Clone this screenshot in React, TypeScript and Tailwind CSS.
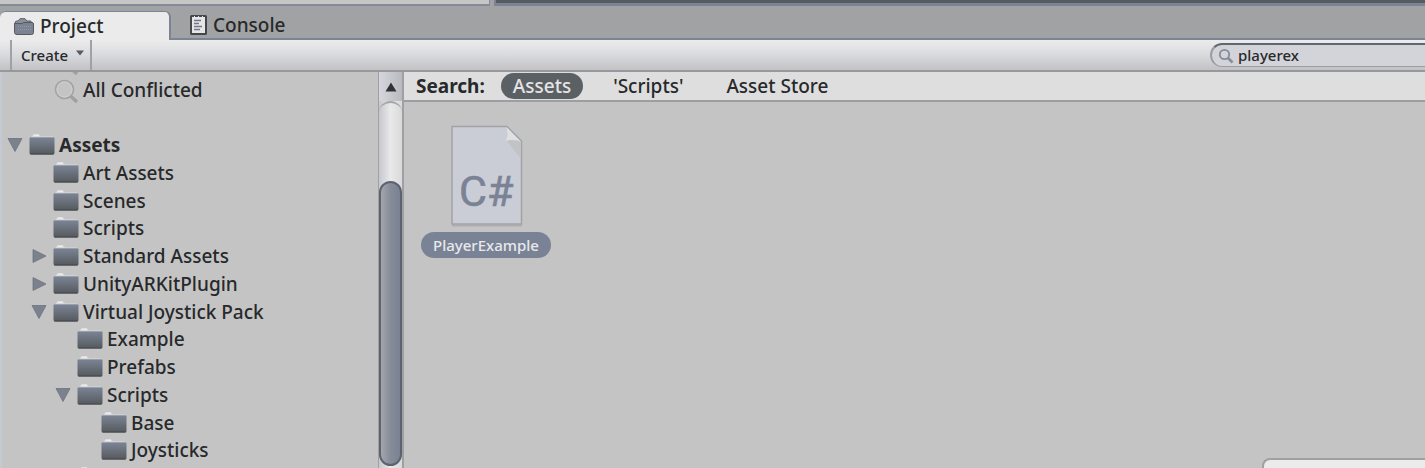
import { useState } from "react";

type Kind = "folder" | "search";

interface Row {
  label: string;
  kind: Kind;
  depth: 0 | 1 | 2 | 3;
  state?: "open" | "closed";
  bold?: boolean;
}

const rows: (Row | null)[] = [
  { label: "", kind: "search", depth: 1 },
  { label: "All Conflicted", kind: "search", depth: 1 },
  null,
  { label: "Assets", kind: "folder", depth: 0, state: "open", bold: true },
  { label: "Art Assets", kind: "folder", depth: 1 },
  { label: "Scenes", kind: "folder", depth: 1 },
  { label: "Scripts", kind: "folder", depth: 1 },
  { label: "Standard Assets", kind: "folder", depth: 1, state: "closed" },
  { label: "UnityARKitPlugin", kind: "folder", depth: 1, state: "closed" },
  { label: "Virtual Joystick Pack", kind: "folder", depth: 1, state: "open" },
  { label: "Example", kind: "folder", depth: 2 },
  { label: "Prefabs", kind: "folder", depth: 2 },
  { label: "Scripts", kind: "folder", depth: 2, state: "open" },
  { label: "Base", kind: "folder", depth: 3 },
  { label: "Joysticks", kind: "folder", depth: 3 },
  { label: "", kind: "folder", depth: 2 },
];

const indents = ["pl-1", "pl-7", "pl-13", "pl-19"];

function FolderIcon() {
  return (
    <svg viewBox="0 0 26 22" className="h-[22px] w-[26px] shrink-0" aria-hidden="true">
      <defs>
        <linearGradient id="folder" x1="0" y1="0" x2="0" y2="1">
          <stop offset="0" stopColor="#7d8596" />
          <stop offset="0.55" stopColor="#676d77" />
          <stop offset="1" stopColor="#55595c" />
        </linearGradient>
      </defs>
      <path d="M2 3.500 L4.500 0.500 H10 L12 2.500 H24 V4 H1.500Z" fill="#d8d9dd" />
      <path d="M4.500 1.200 H10" stroke="#efeff1" strokeWidth="1.400" />
      <rect x="0.500" y="3" width="25" height="17.500" rx="1.500" fill="url(#folder)" />
      <path d="M1 3.500 H25" stroke="#98a0ad" />
      <path d="M1.500 20 H24.500" stroke="#43474b" />
    </svg>
  );
}

function LensIcon() {
  return (
    <svg viewBox="0 0 26 26" className="h-[26px] w-[26px] shrink-0" fill="none" aria-hidden="true">
      <circle cx="11.500" cy="12.500" r="9" stroke="#a3a3a4" strokeWidth="1.600" />
      <circle cx="11.500" cy="12.500" r="7.500" stroke="#d0d0d2" strokeWidth="1" />
      <path d="M17.500 19 L24 25" stroke="#a0a0a1" strokeWidth="3.500" />
    </svg>
  );
}

function Arrow({ open }: { open: boolean }) {
  return (
    <svg viewBox="0 0 16 16" className="h-4 w-4" aria-hidden="true">
      <path
        d={open ? "M1 1.500 H15 L8 14.500Z" : "M2 1.500 L15 8 L2 14.500Z"}
        fill="#7b818d"
        stroke="#6d7380"
        strokeWidth="0.800"
      />
    </svg>
  );
}

function ProjectIcon() {
  return (
    <svg viewBox="0 0 20 17" className="h-[17px] w-5" aria-hidden="true">
      <path d="M1 5 Q1 3 3 3 H4 L6 0.700 H11 L13 3 H17 V6 H1Z" fill="#8a909d" stroke="#5b6067" />
      <path d="M0.500 5.500 H8 L9.500 4.500 H18 Q19.500 4.500 19.500 6 V14.500 Q19.500 16.500 17.500 16.500 H3 Q0.500 16.500 0.500 14.500Z" fill="#7b8292" stroke="#575b60" />
      <path d="M4 8.500 H17 M4 11.500 H17" stroke="#9298a5" strokeDasharray="1 1" />
    </svg>
  );
}

function ConsoleIcon() {
  return (
    <svg viewBox="0 0 17 20" className="h-5 w-[17px]" aria-hidden="true">
      <rect x="1" y="1" width="15" height="18" rx="0.500" fill="#e6e6e8" stroke="#43474a" strokeWidth="2" />
      <path d="M4.500 1 V3 M8.500 1 V3 M12.500 1 V3" stroke="#e6e6e8" strokeWidth="1" />
      <path d="M4 5.500 H11 M4 8.500 H9 M4 11.500 H12 M4 14.500 H10" stroke="#6f7685" strokeWidth="1.300" />
    </svg>
  );
}

function ScriptFileIcon() {
  return (
    <svg viewBox="0 0 74 102" className="h-[102px] w-[74px]" aria-hidden="true">
      <path d="M3 100.500 H73" stroke="#aeaeb0" strokeWidth="2" />
      <path d="M3 1.500 H58 L72.500 16 V99 H3Z" fill="#cacdd6" stroke="#a1a2a5" strokeWidth="1.500" />
      <path d="M57 15 L72 34 V16Z" fill="#c1c3c4" />
      <path d="M57.500 2 Q60 13 56 16 Q66 13 72 17Z" fill="#dfe0e2" />
      <text
        x="10"
        y="81"
        fontSize="43"
        fill="#7a8395"
        stroke="#7a8395"
        strokeWidth="0.600"
        className="font-['Roboto',sans-serif]"
      >
        C#
      </text>
    </svg>
  );
}

function TreeRow({ row }: { row: Row }) {
  return (
    <li className={`flex min-h-0 items-center ${indents[row.depth]}`}>
      <span className="flex w-[23px] shrink-0 items-center pl-px">
        {row.state && (
          <button type="button" aria-label={`Toggle ${row.label}`}>
            <Arrow open={row.state === "open"} />
          </button>
        )}
      </span>
      {row.kind === "folder" ? <FolderIcon /> : <LensIcon />}
      <span className={`pl-1 whitespace-nowrap ${row.bold ? "font-bold" : "font-medium"}`}>{row.label}</span>
    </li>
  );
}

export default function App() {
  const [query, setQuery] = useState("playerex");
  return (
    <div className="flex h-screen flex-col overflow-hidden bg-[#c4c4c4] font-['Noto_Sans',sans-serif] text-[19px] leading-6 text-[#27292b]">
      <div className="flex h-[6px] shrink-0 gap-1 bg-[#a1a2a4]">
        <div className="w-[490px] border-r border-b-2 border-[#848a97] bg-[#c6c6c7]" />
        <div className="flex-1 border-b-3 border-l-2 border-[#7b8394] bg-[#565b60]" />
      </div>

      <nav className="flex h-[34px] shrink-0 items-end bg-[#a1a2a4] pt-[5px]">
        <button
          type="button"
          className="flex h-full w-[171px] items-center gap-[6px] rounded-t-md border-t border-r-2 border-[#7b8394] bg-[#ebebeb] pl-[14px] font-medium"
        >
          <ProjectIcon />
          Project
        </button>
        <button
          type="button"
          className="flex h-full flex-1 items-center gap-[6px] border-b-2 border-[#7b8394] pl-[19px] font-medium"
        >
          <ConsoleIcon />
          Console
        </button>
      </nav>

      <div className="flex h-8 shrink-0 items-center justify-between border-b-2 border-[#96989d] bg-linear-to-b from-[#ececec] via-[#d9dade] to-[#c2c2c4] pl-[10px]">
        <button
          type="button"
          className="flex h-full items-center gap-2 border-x-2 border-[#a1a1a3] pr-[6px] pl-[9px] text-[15px] font-medium"
        >
          Create
          <svg viewBox="0 0 8 6" className="mb-1 h-[6px] w-2" aria-hidden="true">
            <path d="M0 0.500 H8 L4 5.500Z" fill="#555b66" />
          </svg>
        </button>
        <label className="flex h-6 w-[215px] items-center gap-1 rounded-l-full border-t-2 border-b border-l-2 border-[#9b9da2] border-t-[#62676f] bg-[#d3d4d9] pl-[6px]">
          <svg viewBox="0 0 16 16" className="h-4 w-4 shrink-0" fill="none" aria-hidden="true">
            <circle cx="6.500" cy="6.500" r="4.700" stroke="#858c9a" strokeWidth="1.800" />
            <path d="M10 10 L14.500 14.500" stroke="#858c9a" strokeWidth="2.600" />
          </svg>
          <input
            type="text"
            aria-label="Search"
            value={query}
            onChange={(e) => setQuery(e.target.value)}
            className="w-full min-w-0 bg-transparent pb-[2px] text-[15px] leading-5 font-medium outline-none"
          />
        </label>
      </div>

      <div className="flex min-h-0 flex-1">
        <aside className="w-[378px] shrink-0 overflow-hidden border-l-2 border-[#c5c9d3]">
          <ul className="-mt-6 grid h-[444px] auto-rows-fr">
            {rows.map((row, i) => (row ? <TreeRow key={i} row={row} /> : <li key={i} aria-hidden="true" />))}
          </ul>
        </aside>

        <div className="flex w-[26px] shrink-0 flex-col border-r-2 border-l border-[#a0a0a2] bg-linear-to-r from-[#c6c8ce] via-[#e9e9ea] to-[#d9d9da]">
          <button
            type="button"
            aria-label="Scroll up"
            className="flex h-[29px] shrink-0 items-center justify-center bg-linear-to-r from-[#d6d7dc] to-[#b8babf]"
          >
            <svg viewBox="0 0 12 10" className="h-[10px] w-3" aria-hidden="true">
              <path d="M6 0.500 L11.500 9.500 H0.500Z" fill="#303336" />
            </svg>
          </button>
          <div className="flex min-h-0 flex-1 flex-col rounded-t-full border-t-2 border-[#a6a6a8] pt-[78px] pb-[2px]">
            <div className="flex-1 rounded-full border-2 border-[#5d636e] bg-linear-to-r from-[#a4a6ab] via-[#858c99] to-[#7a8394]" />
          </div>
        </div>

        <main className="flex min-w-0 flex-1 flex-col">
          <div className="flex h-[30px] shrink-0 items-center border-b-2 border-[#9c9ea2] bg-[#dedede] pl-3">
            <span className="font-bold">Search:</span>
            <button
              type="button"
              className="ml-4 h-[26px] rounded-full bg-[#5b6064] px-3 font-medium text-[#e4e4e6]"
            >
              Assets
            </button>
            <button type="button" className="ml-[30px] font-medium">
              'Scripts'
            </button>
            <button type="button" className="ml-[43px] font-medium">
              Asset Store
            </button>
          </div>
          <div className="flex flex-1 items-start pt-[23px] pl-[17px]">
            <button type="button" className="flex flex-col items-center gap-[5px]">
              <ScriptFileIcon />
              <span className="h-[26px] rounded-full bg-[#7a8395] px-3 text-[15px] leading-[26px] font-medium text-[#e8e9ec]">
                PlayerExample
              </span>
            </button>
          </div>
          <div className="h-[10px] w-[163px] shrink-0 self-end rounded-tl-lg border-t-2 border-l-2 border-[#a0a0a1] bg-[#ebebeb]" />
        </main>
      </div>
    </div>
  );
}
